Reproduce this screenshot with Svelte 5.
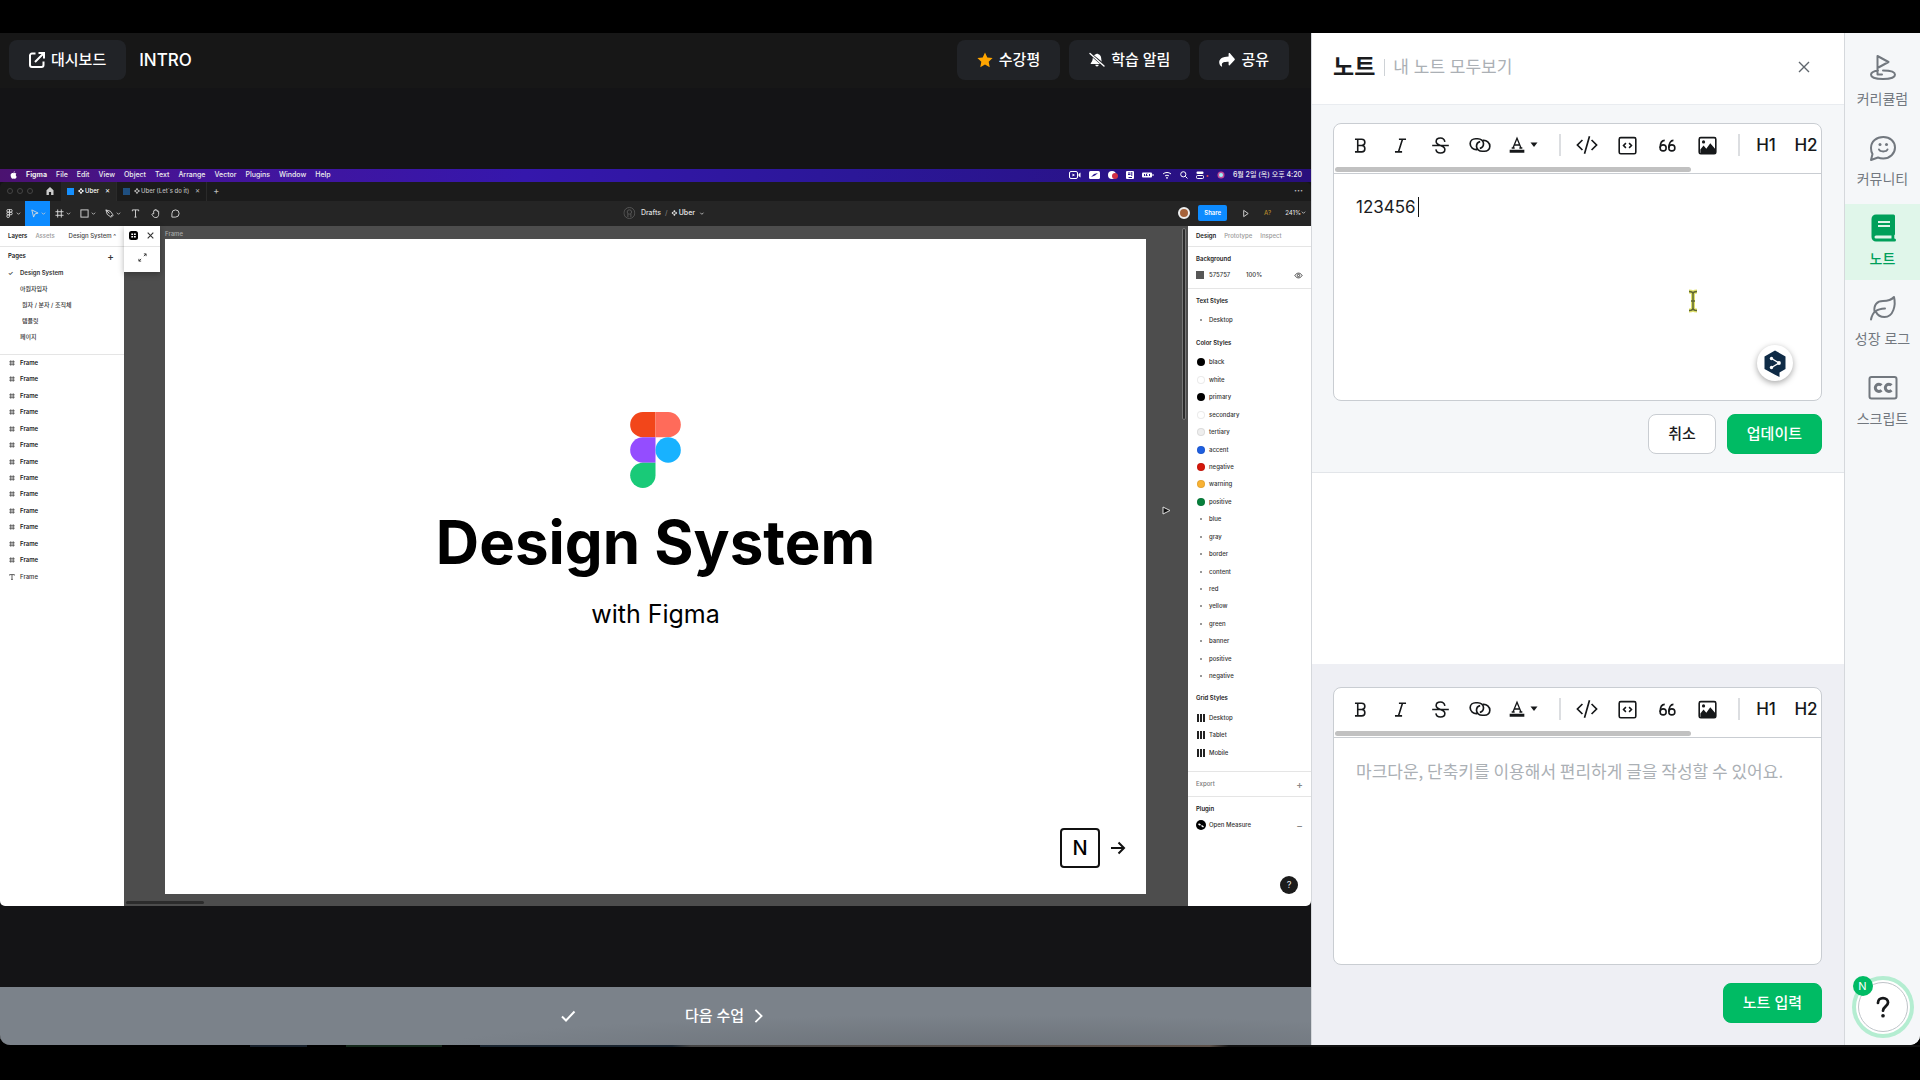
<script>
  /**
   * Lecture player
   *
   * 강의 영상 + 노트 패널 + 사이드 메뉴
   */

  let note = $state('123456');
  let newNote = $state('');

  const menus = ['File', 'Edit', 'View', 'Object', 'Text', 'Arrange', 'Vector', 'Plugins', 'Window', 'Help'];

  const pages = [
    { name: 'Design System', active: true },
    { name: '아원자입자' },
    { name: '원자 / 분자 / 조직체', nested: true },
    { name: '템플릿', nested: true },
    { name: '페이지' },
  ];

  const frames = Array.from({ length: 13 }, () => 'Frame');

  const colorStyles = [
    { name: 'black', color: '#000000' },
    { name: 'white', color: '#ffffff' },
    { name: 'primary', color: '#000000' },
    { name: 'secondary', color: '#ffffff' },
    { name: 'tertiary', color: '#eeeeee' },
    { name: 'accent', color: '#1e5fe0' },
    { name: 'negative', color: '#d4170b' },
    { name: 'warning', color: '#f9b233' },
    { name: 'positive', color: '#07803c' },
    { name: 'blue' },
    { name: 'gray' },
    { name: 'border' },
    { name: 'content' },
    { name: 'red' },
    { name: 'yellow' },
    { name: 'green' },
    { name: 'banner' },
    { name: 'positive' },
    { name: 'negative' },
  ];

  const gridStyles = ['Desktop', 'Tablet', 'Mobile'];

  const tabs = [
    { id: 'curriculum', label: '커리큘럼' },
    { id: 'community', label: '커뮤니티' },
    { id: 'note', label: '노트' },
    { id: 'log', label: '성장 로그' },
    { id: 'script', label: '스크립트' },
  ];

  let activeTab = $state('note');
</script>

{#snippet chevron()}
  <svg class="chev" viewBox="0 0 6 6"><path d="M1 2l2 2 2-2" /></svg>
{/snippet}

{#snippet hash()}
  <svg class="fi" viewBox="0 0 10 10"><path d="M3 0.5v9M7 0.5v9M0.5 3h9M0.5 7h9" /></svg>
{/snippet}

{#snippet diamond()}
  <svg class="diamond" viewBox="0 0 8 8">
    <path d="M4 0l1.700 1.700L4 3.400 2.300 1.700zM4 4.600l1.700 1.700L4 8 2.300 6.300zM0 4l1.700-1.700L3.400 4 1.700 5.700zM4.600 4l1.700-1.700L8 4 6.300 5.700z" />
  </svg>
{/snippet}

{#snippet toolbar()}
  <div class="toolbar">
    <div class="tools">
      <button aria-label="굵게">
        <svg viewBox="0 0 24 24"><path d="M6 4h7.500a4 4 0 0 1 0 8H8M13.500 12a4 4 0 0 1 0 8H6M8.500 4v16M5 4h3M5 20h3" /></svg>
      </button>
      <button aria-label="기울임">
        <svg viewBox="0 0 24 24"><path d="M10 4h9M5 20h9M14.500 4l-5 16" /></svg>
      </button>
      <button aria-label="취소선">
        <svg viewBox="0 0 24 24"><path d="M1.500 12h21M17.500 7.500C17 4.500 15 2.500 12 2.500c-3.200 0-5.500 1.900-5.500 4.500 0 2.500 2.500 4 5.500 5 3.300 1 5.500 2.200 5.500 5 0 2.700-2.200 4.500-5.500 4.500S6.500 19.500 6.200 17" /></svg>
      </button>
      <button aria-label="링크">
        <svg class="wide" viewBox="0 0 28 24">
          <path d="M10.500 17.500C6 18 2.200 14.500 2.200 10.500 2.200 7 5 4.500 8.800 4.500h2.400c4 0 7 2.700 7 6 0 3-2.200 5-4.400 5.500" />
          <path d="M17.500 6.500c4.500-.5 8.300 3 8.300 7 0 3.500-2.800 6-6.600 6h-2.400c-4 0-7-2.700-7-6 0-3 2.200-5 4.400-5.500" />
        </svg>
      </button>
      <button class="color" aria-label="글자색">
        <svg viewBox="0 0 24 24">
          <path d="M6 16.500L12 2l6 14.500M8.300 12h7.400M4 16.500h4.500M15.500 16.500H20" /><path class="solid" d="M1 19h22v4.500H1z" />
        </svg>
        <svg class="drop" viewBox="0 0 8 6"><path class="solid" d="M0.500 0.500h7L4 5z" /></svg>
      </button>
      <span class="sep"></span>
      <button aria-label="인라인 코드">
        <svg class="wide" viewBox="0 0 28 24"><path d="M8.500 6L2.500 12l6 6M19.500 6l6 6-6 6M17 1.500l-6 21" /></svg>
      </button>
      <button aria-label="코드 블록">
        <svg viewBox="0 0 24 24"><rect x="1.500" y="2" width="21" height="20.500" rx="2" /><path d="M10 9l-3 3 3 3M14 9l3 3-3 3" /></svg>
      </button>
      <button aria-label="인용">
        <svg viewBox="0 0 24 24">
          <circle cx="6.500" cy="15" r="3.800" /><path d="M8.500 5.500C5 5.500 2.700 9 2.700 15" />
          <circle cx="17.500" cy="15" r="3.800" /><path d="M19.500 5.500c-3.500 0-5.800 3.500-5.800 9.500" />
        </svg>
      </button>
      <button aria-label="이미지">
        <svg viewBox="0 0 24 24">
          <rect x="1.500" y="2" width="21" height="20.500" rx="2" /><circle class="solid" cx="7" cy="7.500" r="2" />
          <path class="solid" d="M3 21.500V17l4-5 3.500 4L15.500 9l6 7v5.500z" />
        </svg>
      </button>
      <span class="sep"></span>
      <button class="heading">H1</button>
      <button class="heading">H2</button>
    </div>
    <div class="scrollbar"></div>
  </div>
{/snippet}

<div class="app">
  <div class="window">
    <main class="player">
      <header class="top">
        <a class="chip" href="#dashboard">
          <svg viewBox="0 0 16 16" class="line"><path d="M6.500 1.500H3a2 2 0 0 0-2 2V13a2 2 0 0 0 2 2h9.500a2 2 0 0 0 2-2V9.500M6 10l8.500-8.500M9.500 1h5.500v5.500" /></svg>
          대시보드
        </a>
        <h1>INTRO</h1>
        <div class="spacer"></div>
        <button class="chip">
          <svg viewBox="0 0 16 16"><path fill="#ffa500" d="M8 0.500l2.300 4.900 5.300 0.700-3.900 3.700 1 5.400L8 12.600l-4.700 2.600 1-5.400L0.400 6.100l5.300-0.700z" /></svg>
          수강평
        </button>
        <button class="chip">
          <svg viewBox="0 0 16 16"><path fill="#fff" d="M5 3.300C5.700 2.500 6.600 2 7.400 1.900a.8.800 0 0 1 1.400 0c2 .4 3.400 2 3.400 4.300 0 1.500.3 2.700.8 3.600zM3.800 5.800L11 12H2.300c-.6 0-.8-.7-.4-1.100 1-1.100 1.800-2.300 1.900-5.100zM6.300 12.800h3.400a1.700 1.700 0 0 1-3.400 0z" /><path stroke="#fff" stroke-width="1.400" stroke-linecap="round" d="M1 1.500l14 12.500" /></svg>
          학습 알림
        </button>
        <button class="chip">
          <svg viewBox="0 0 16 16"><path fill="#fff" d="M9.600 1.400v3C3.600 4.500 0.200 6.600 0.200 10.300c0 1.800.9 3.400 2.200 4.300.4.300.8-.1.700-.5C2 10.500 4.500 9.700 9.600 9.700v3c0 .6.7.9 1.100.5l4.900-5.300a.9.900 0 0 0 0-1.200l-4.900-5.600c-.4-.4-1.100-.2-1.100.3z" /></svg>
          공유
        </button>
      </header>

      <section class="stage">
        <div class="video">
          <div class="menubar">
            <svg viewBox="0 0 8 9" class="apple"><path d="M5.400 0.200C4.600.3 3.900 1 4 1.900 4.900 1.900 5.500 1.100 5.400.2zM6.500 4.600c0-.9.700-1.300.8-1.400C6.500 2.100 5.300 2.200 4.900 2.300c-.6.300-.9.200-1.600 0C2 1.900.700 3 .7 4.800c0 2 1.300 3.900 2.200 3.900.5 0 .8-.3 1.400-.3s.8.300 1.400.3c.8 0 1.500-1.200 1.800-2.100-.6-.3-1-1-1-2z" /></svg>
            <b>Figma</b>
            {#each menus as m}<span>{m}</span>{/each}
            <div class="status">
              <svg viewBox="0 0 12 8"><rect x="0.500" y="0.500" width="8" height="7" rx="1.500" class="o" /><path d="M3.500 2.500v3l2.500-1.500zM9.500 3l2-1.500v5l-2-1.500z" /></svg>
              <svg viewBox="0 0 11 8"><rect width="11" height="8" rx="1.500" /><path fill="#2a1690" d="M2 6l3-3 4-1-3 2.500z" /></svg>
              <svg viewBox="0 0 10 8"><circle cx="4" cy="4" r="4" /><circle cx="7" cy="5" r="3" fill="#d22f45" /></svg>
              <svg viewBox="0 0 8 8"><rect width="8" height="8" rx="1" /><path stroke="#2a1690" d="M2 2h2.500M2 3.500h2.500M5.800 1v4M2.500 6.500h3.500" /></svg>
              <svg viewBox="0 0 12 8"><rect y="1.500" width="10" height="5" rx="1" /><path d="M11 3v2" stroke="#fff" /><path stroke="#2a1690" d="M2.500 3v2M5 2.500L4 4.500h1.500M7.500 3v2" /></svg>
              <svg viewBox="0 0 10 8"><path class="o" d="M1 3c2.400-2 5.600-2 8 0M3 5c1.200-1 2.800-1 4 0" /><circle cx="5" cy="6.800" r="0.900" /></svg>
              <svg viewBox="0 0 8 8"><circle cx="3.300" cy="3.300" r="2.600" class="o" /><path class="o" d="M5.300 5.300L7.500 7.500" /></svg>
              <svg viewBox="0 0 13 8"><rect x="0.500" y="0.500" width="7" height="2.500" rx="1" /><rect x="0.500" y="4.500" width="7" height="3" rx="1" class="o" /><circle cx="11.500" cy="5" r="1" fill="#e05050" /></svg>
              <svg viewBox="0 0 8 8"><circle cx="4" cy="4" r="3.500" fill="#c04a9a" /><circle cx="4" cy="4" r="2" fill="#9df3f5" /></svg>
              <span>6월 2일 (목) 오후 4:20</span>
            </div>
          </div>

          <div class="filebar">
            <i></i><i></i><i></i>
            <div class="home"><svg viewBox="0 0 8 8"><path fill="#ccc" d="M4 0L0.500 3.200V8h2.400V5h2.200v3h2.400V3.200z" /></svg></div>
            <div class="file on"><em></em>{@render diamond()}Uber<span class="x">✕</span></div>
            <div class="file"><em></em>{@render diamond()}Uber (Let`s do it)<span class="x">✕</span></div>
            <span class="plus">+</span>
            <span class="dots">···</span>
          </div>

          <div class="figbar">
            <div class="tool"><svg class="fi" viewBox="0 0 10 10"><path d="M5 0.500H3.500a1.500 1.500 0 0 0 0 3H5zM5 0.500h1.500a1.500 1.500 0 0 1 0 3H5zM5 3.500H3.500a1.500 1.500 0 0 0 0 3H5zM5 6.500H3.500A1.500 1.500 0 1 0 5 8zM6.500 3.500a1.500 1.500 0 1 1 0 3 1.500 1.500 0 0 1 0-3z" /></svg>{@render chevron()}</div>
            <div class="tool on"><svg class="fi" viewBox="0 0 10 10"><path d="M2 1l7 3.500-3.500 1L4 9z" /></svg>{@render chevron()}</div>
            <div class="tool">{@render hash()}{@render chevron()}</div>
            <div class="tool"><svg class="fi" viewBox="0 0 10 10"><rect x="1" y="1" width="8" height="8" /></svg>{@render chevron()}</div>
            <div class="tool"><svg class="fi" viewBox="0 0 10 10"><path d="M1 1l5 1.500L8.500 6 6 8.500 2.500 6zM1 1l4 4M6.500 9.500l3-3" /></svg>{@render chevron()}</div>
            <div class="tool single"><svg class="fi" viewBox="0 0 10 10"><path d="M1.500 2.500v-1.500h7v1.500M5 1v8M3.800 9h2.400" /></svg></div>
            <div class="tool single"><svg class="fi" viewBox="0 0 10 10"><path d="M3 5.500V2a.7.700 0 0 1 1.300 0V1a.7.700 0 0 1 1.400 0v.8a.7.700 0 0 1 1.400 0v1a.7.700 0 0 1 1.400 0V6c0 2-1 3.500-3.200 3.500C3 9.500 2 8 1 5.800c.5-.8 1.500-.8 2-.3z" /></svg></div>
            <div class="tool single"><svg class="fi" viewBox="0 0 10 10"><path d="M1 9V5a4 4 0 1 1 4 4z" /></svg></div>
            <div class="doc"><svg class="fi user" viewBox="0 0 12 12"><circle cx="6" cy="6" r="5.500" /><circle cx="6" cy="5" r="2.200" /><path d="M4.500 7v3M7.500 7v3" /></svg><span>Drafts</span><span class="dim">/</span><b>{@render diamond()}Uber</b>{@render chevron()}</div>
            <div class="actions">
              <div class="avatar"></div>
              <button class="share">Share</button>
              <svg class="fi" viewBox="0 0 10 10"><path d="M3 1.500L8 5 3 8.500z" /></svg>
              <span class="warn">A?</span>
              <span>241%{@render chevron()}</span>
            </div>
          </div>

          <div class="figma">
            <aside class="layers">
              <div class="tabs"><b>Layers</b><span>Assets</span><span class="page">Design System ^</span></div>
              <div class="pages">
                <div class="pages-head"><b>Pages</b><span>+</span></div>
                {#each pages as p}
                  <div class="page-row" class:nested={p.nested} class:current={p.active}><i>{p.active ? '✓' : ''}</i>{p.name}</div>
                {/each}
              </div>
              <div class="frames">
                {#each frames as f}
                  <div class="frame-row">{@render hash()}<b>{f}</b></div>
                {/each}
                <div class="frame-row text"><svg class="fi" viewBox="0 0 10 10"><path d="M1 2.500V1h8v1.500M5 1v8M3.500 9h3" /></svg>Frame</div>
              </div>
            </aside>

            <div class="canvas">
              <span class="frame-label">Frame</span>
              <div class="plugin">
                <div><svg viewBox="0 0 9 9"><rect width="9" height="9" rx="2.500" /><path stroke="#fff" stroke-width="1.400" d="M2.300 3.300h1.800M5 3.300h1.800M2.300 5.800h1.800M5 5.800h1.800" /></svg><svg class="fi dark" viewBox="0 0 8 8"><path d="M1.500 1.500l5 5M6.500 1.500l-5 5" /></svg></div>
                <div><svg class="fi dark" viewBox="0 0 10 10"><path d="M6.500 3.500L9 1M6.500 1H9v2.500M3.500 6.500L1 9M1 6.500V9h2.500" /></svg></div>
              </div>
              <div class="artboard">
                <svg class="logo" viewBox="0 0 50 75">
                  <path fill="#f2461a" d="M25 0H12.500a12.500 12.500 0 0 0 0 25H25z" />
                  <path fill="#ff6b5a" d="M25 0h12.500a12.500 12.500 0 0 1 0 25H25z" />
                  <path fill="#944dff" d="M25 25H12.500a12.500 12.500 0 0 0 0 25H25z" />
                  <circle fill="#18b2ff" cx="37.500" cy="37.500" r="12.500" />
                  <path fill="#19ca78" d="M25 50H12.500A12.500 12.500 0 1 0 25 62.500z" />
                </svg>
                <h2>Design System</h2>
                <p>with Figma</p>
                <div class="next"><kbd>N</kbd><svg viewBox="0 0 16 14"><path d="M1 7h13M8.500 1.500L14 7l-5.500 5.500" /></svg></div>
              </div>
              <svg class="pointer" viewBox="0 0 9 9"><path fill="#111" stroke="#ddd" d="M1 1l7 3.500L1 8z" /></svg>
              <div class="vbar"></div>
              <div class="hbar"></div>
            </div>

            <aside class="props">
              <div class="tabs"><b>Design</b><span>Prototype</span><span>Inspect</span></div>
              <div class="bg">
                <h3>Background</h3>
                <div class="row"><em></em><span class="hex">575757</span>100%<svg class="fi dark eye" viewBox="0 0 10 8"><path d="M1 4c2-3.500 6-3.500 8 0-2 3.500-6 3.500-8 0z" /><circle cx="5" cy="4" r="1.300" /></svg></div>
              </div>
              <div class="styles">
                <h3>Text Styles</h3>
                <div class="row"><i class="arrow"></i>Desktop</div>
                <h3 class="colors-head">Color Styles</h3>
                <div class="colors">
                  {#each colorStyles as c}
                    <div class="row">
                      {#if c.color}<i class="swatch" style="background: {c.color}"></i>{:else}<i class="arrow"></i>{/if}{c.name}
                    </div>
                  {/each}
                </div>
                <h3>Grid Styles</h3>
                <div class="grids">
                  {#each gridStyles as g}
                    <div class="row"><i class="cols"></i>{g}</div>
                  {/each}
                </div>
              </div>
              <div class="export"><span>Export</span><span class="sign">+</span></div>
              <div class="plugins">
                <h3>Plugin</h3>
                <div class="row"><svg class="om" viewBox="0 0 10 10"><circle cx="5" cy="5" r="5" /><path stroke="#fff" stroke-width="1.500" d="M2.500 4l2 1M5.500 5.500l2 1.500" /></svg>Open Measure<span class="sign">−</span></div>
              </div>
              <div class="qmark">?</div>
            </aside>
          </div>
        </div>
      </section>

      <footer class="bottom">
        <svg class="check" viewBox="0 0 16 14"><path d="M2 7.500l4 4 8.500-9" /></svg>
        <button>다음 수업<svg viewBox="0 0 10 18"><path d="M1.500 2l7 7-7 7" /></svg></button>
      </footer>
    </main>

    <section class="panel">
      <header class="panel-head">
        <h2>노트</h2>
        <a href="#notes">내 노트 모두보기</a>
        <button aria-label="닫기"><svg viewBox="0 0 12 12"><path d="M1 1l10 10M11 1L1 11" /></svg></button>
      </header>

      <div class="edit">
        <div class="editor">
          {@render toolbar()}
          <textarea aria-label="노트 수정" bind:value={note}></textarea>
          <span class="caret"></span>
          <svg class="ibeam" viewBox="0 0 12 24"><path stroke="#dfe06a" stroke-width="4" d="M2 2.500c2 0 4 .5 4 2.500v14c0 2-2 2.500-4 2.500M10 2.500c-2 0-4 .5-4 2.500v14c0 2 2 2.500 4 2.500" /><path stroke="#5f6530" stroke-width="1.500" d="M2 2.500c2 0 4 .5 4 2.500v14c0 2-2 2.500-4 2.500M10 2.500c-2 0-4 .5-4 2.500v14c0 2 2 2.500 4 2.500M4 12h4" /></svg>
          <button class="deepl" aria-label="DeepL">
            <svg viewBox="0 0 22 27"><path fill="#0f2b46" d="M11 0.500l10.500 6v12.500l-6 3.500v4.500l-5-2.500L0.500 19V6.500z" /><path stroke="#fff" stroke-width="1.300" fill="none" d="M7.500 8.500l7.500 4.500-7.500 4.500" /><circle cx="7.500" cy="8.500" r="1.700" fill="#fff" /><circle cx="15" cy="13" r="1.900" fill="#fff" /><circle cx="7.500" cy="17.500" r="1.700" fill="#fff" /></svg>
          </button>
        </div>
        <div class="buttons">
          <button class="btn">취소</button>
          <button class="btn primary">업데이트</button>
        </div>
      </div>

      <div class="list"></div>

      <div class="write">
        <div class="editor">
          {@render toolbar()}
          <textarea aria-label="노트 작성" placeholder="마크다운, 단축키를 이용해서 편리하게 글을 작성할 수 있어요." bind:value={newNote}></textarea>
        </div>
        <div class="buttons">
          <button class="btn primary">노트 입력</button>
        </div>
      </div>
    </section>

    <nav class="side">
      {#each tabs as t}
        <button class:active={activeTab === t.id} onclick={() => (activeTab = t.id)}>
          <svg viewBox="0 0 30 30">
            {#if t.id === 'curriculum'}
              <path d="M9.500 21.500V3l11 6-11 6M10 17.500c-4 .6-7 2-7 4.200C3 24.500 8.500 26 15 26s12-1.500 12-4.300c0-2.700-5-4.200-12-4.200M9.500 21.500h4.500" />
            {:else if t.id === 'community'}
              <path d="M3 27l1.500-6C3.300 19 3 17 3 15 3 8.500 8.500 4 15.300 4S27 8.500 27 14.500 22 25.500 15.300 25.500c-2 0-3.800-.3-5.300-1zM11 16.500c1 2.500 7.500 2.500 8.500 0" />
              <circle class="dot" cx="12" cy="11.500" r="1.500" /><circle class="dot" cx="18.500" cy="11.500" r="1.500" />
            {:else if t.id === 'note'}
              <path class="book" fill-rule="evenodd" d="M8 1.500h17.500a1.500 1.500 0 0 1 1.500 1.500v18a1.500 1.500 0 0 1-.7 1.300v3.200h.2a1.500 1.500 0 0 1 0 3H8A4.500 4.500 0 0 1 3.500 24V6A4.500 4.500 0 0 1 8 1.500zM8 22.500a1.500 1.500 0 0 0 0 3h15.500v-3zM10 8v2h12V8zM10 12v2h12v-2z" />
            {:else if t.id === 'log'}
              <path d="M3 26.500C4.500 18.500 9 16 17 15.500M6.500 19C5.500 12 9 8 15 8c5 0 8-.5 11-4 2 8-.5 20-9.500 20-4 0-7-2-8.500-5" />
            {:else}
              <rect x="1.500" y="4" width="27" height="21.500" rx="2" />
              <path class="cc" d="M13.500 12.300a3.600 3.600 0 1 0 0 5M23.500 12.300a3.600 3.600 0 1 0 0 5" />
            {/if}
          </svg>
          {t.label}
        </button>
      {/each}
      <button class="help" aria-label="도움말">
        <svg viewBox="0 0 16 24"><path d="M2.500 7.500C2.500 4 5 2.200 8 2.200s5.500 1.900 5.500 5c0 4-5.500 4.200-5.500 8.800" /><circle cx="8" cy="21.500" r="2" /></svg>
        <span class="badge">N</span>
      </button>
    </nav>
  </div>
  <div class="dock"></div>
</div>

<style>
  :global(body) {
    margin: 0;
    background: #000;
  }

  .app {
    display: flex;
    flex-direction: column;
    box-sizing: border-box;
    height: 100vh;
    padding: 33px 0;
    background: #000;
    font-family: Inter, 'Noto Sans CJK KR', sans-serif;
  }

  .app :global(*) {
    box-sizing: border-box;
  }

  button {
    font: inherit;
    border: 0;
    padding: 0;
    cursor: pointer;
  }

  a {
    text-decoration: none;
  }

  h1,
  h2,
  h3,
  p {
    margin: 0;
  }

  .window {
    flex: 1;
    min-height: 0;
    display: grid;
    grid-template-columns: minmax(0, 1fr) 534px 75px;
    border-radius: 0 0 10px 10px;
    overflow: hidden;
    background: #f5f7f9;
  }

  .dock {
    height: 2px;
    background: linear-gradient(90deg, #000 13%, #17202b 13%, #17202b 16%, #000 16%, #000 18%, #14281a 18%, #14281a 23%, #000 23%, #000 25%, #1a2530 25%, #1a2530 35%, #444 36%, #5c5048 63%, #111 64%);
  }

  /* player */
  .player {
    display: flex;
    flex-direction: column;
    background: #141416;
    min-height: 0;
  }

  .top {
    display: flex;
    align-items: center;
    gap: 9px;
    height: 55px;
    padding: 0 22px 2px 9px;
    background: #171717;
    color: #fff;
  }

  .top h1 {
    margin-left: 4px;
    font-size: 17px;
    font-weight: 500;
    line-height: 24px;
  }

  .spacer {
    flex: 1;
  }

  .chip {
    display: flex;
    align-items: center;
    gap: 6px;
    height: 40px;
    padding: 0 20px;
    border-radius: 8px;
    background: #212327;
    color: #fff;
    font-size: 15px;
    font-weight: 500;
    line-height: 24px;
  }

  .chip svg {
    width: 16px;
    height: 16px;
    fill: none;
  }

  .chip .line {
    stroke: #fff;
    stroke-width: 2;
  }

  .stage {
    flex: 1;
    display: flex;
    align-items: center;
    min-height: 0;
  }

  .video {
    display: flex;
    flex-direction: column;
    width: 100%;
    aspect-ratio: 16 / 9;
    border-radius: 0 0 5px 5px;
    overflow: hidden;
    font-size: 6px;
    font-weight: 500;
    line-height: 10px;
    color: #333;
  }

  .menubar {
    display: flex;
    align-items: center;
    gap: 9px;
    height: 13px;
    padding: 0 9px 0 10px;
    background: linear-gradient(90deg, #4b1270, #45149a 15%, #3517ac 40%, #2b1798 65%, #280f7c);
    color: #eee;
    font-size: 7px;
    font-weight: 500;
    white-space: nowrap;
  }

  .menubar svg {
    height: 8px;
    fill: #fff;
  }

  .menubar .o {
    fill: none;
    stroke: #fff;
  }

  .status {
    display: flex;
    align-items: center;
    gap: 8px;
    margin-left: auto;
  }

  .filebar {
    display: flex;
    align-items: center;
    height: 19px;
    padding-left: 7px;
    border-radius: 5px 5px 0 0;
    background: #1b1b1b;
    color: #bbb;
  }

  .filebar > i {
    width: 6px;
    height: 6px;
    margin-right: 4px;
    border: 1px solid #444;
    border-radius: 50%;
  }

  .home {
    display: flex;
    width: 22px;
    justify-content: center;
    margin-left: 2px;
  }

  .home svg {
    width: 8px;
  }

  .file {
    display: flex;
    align-items: center;
    align-self: stretch;
    padding: 0 6px;
    border-right: 1px solid #2a2a2a;
    white-space: nowrap;
  }

  .file.on {
    background: #252525;
    color: #fff;
  }

  .file em {
    width: 7px;
    height: 7px;
    margin-right: 4px;
    background: #1f4f80;
  }

  .file.on em {
    background: #1590ff;
  }

  .x {
    margin-left: 6px;
  }

  .diamond {
    width: 6px;
    height: 6px;
    margin-right: 1px;
    fill: currentColor;
  }

  .plus {
    margin-left: 6px;
    font-size: 9px;
  }

  .dots {
    margin: 0 8px 0 auto;
    font-size: 9px;
    font-weight: 700;
  }

  .figbar {
    display: flex;
    align-items: center;
    position: relative;
    height: 25px;
    background: #252525;
    color: #ddd;
  }

  .fi {
    width: 9px;
    height: 9px;
    fill: none;
    stroke: #ddd;
    stroke-width: 1;
  }

  .fi.dark {
    stroke: #333;
  }

  .chev {
    width: 5px;
    height: 5px;
    fill: none;
    stroke: #ccc;
  }

  .tool {
    display: flex;
    align-items: center;
    justify-content: center;
    align-self: stretch;
    gap: 2px;
    width: 25px;
  }

  .tool.on {
    background: #0d8bff;
  }

  .tool.single {
    width: 20px;
  }

  .doc {
    position: absolute;
    left: 50%;
    transform: translateX(-50%);
    display: flex;
    align-items: center;
    gap: 4px;
    padding-left: 16px;
    font-size: 7px;
  }

  .doc b {
    display: flex;
    align-items: center;
    font-weight: 600;
  }

  .user {
    width: 12px;
    height: 12px;
    margin-right: 2px;
    stroke: #555;
  }

  .dim {
    color: #777;
  }

  .actions {
    display: flex;
    align-items: center;
    gap: 14px;
    margin: 0 5px 0 auto;
  }

  .avatar {
    width: 12px;
    height: 12px;
    margin-right: -6px;
    border: 2px solid #eee;
    border-radius: 50%;
    background: #a5623a;
  }

  .share {
    height: 16px;
    padding: 0 6px;
    border-radius: 2px;
    background: #0d8bff;
    color: #fff;
    font-weight: 600;
  }

  .warn {
    color: #b8892c;
  }

  .figma {
    flex: 1;
    display: grid;
    grid-template-columns: 124px minmax(0, 1fr) 123px;
    min-height: 0;
  }

  .layers,
  .props {
    background: #fff;
  }

  .figma b,
  .figma h3 {
    font-size: 6px;
    font-weight: 600;
    line-height: 10px;
    color: #222;
  }

  .tabs {
    display: flex;
    align-items: center;
    gap: 8px;
    height: 21px;
    padding: 1px 8px 0;
    border-bottom: 1px solid #e5e5e5;
    color: #999;
  }

  .tabs .page {
    margin-left: auto;
    color: #444;
  }

  .pages {
    height: 108px;
    padding: 1px 8px 0;
    border-bottom: 1px solid #e5e5e5;
  }

  .pages-head {
    display: flex;
    justify-content: space-between;
    align-items: center;
    height: 17px;
    padding-right: 2px;
  }

  .pages-head span {
    font-size: 10px;
  }

  .page-row {
    display: flex;
    align-items: center;
    height: 16px;
  }

  .page-row.current {
    font-weight: 600;
  }

  .page-row i {
    width: 12px;
    font-style: normal;
  }

  .page-row.nested i {
    width: 14px;
  }

  .frames {
    display: grid;
    grid-auto-rows: 1fr;
    height: 230px;
  }

  .frame-row {
    display: flex;
    align-items: center;
    gap: 5px;
    padding-left: 9px;
  }

  .frame-row .fi {
    width: 6px;
    height: 6px;
    stroke: #444;
    stroke-width: 1.4;
  }

  .canvas {
    position: relative;
    display: flex;
    padding: 13px 42px 12px 41px;
    background: #4d4d4d;
  }

  .frame-label {
    position: absolute;
    top: 3px;
    left: 41px;
    color: #aaa;
  }

  .plugin {
    position: absolute;
    top: 0;
    left: 0;
    width: 36px;
    height: 46px;
    background: #fff;
    box-shadow: 0 2px 6px rgba(0, 0, 0, 0.3);
  }

  .plugin div {
    display: flex;
    align-items: center;
    justify-content: center;
    gap: 8px;
    height: 21px;
    border-bottom: 1px solid #e5e5e5;
  }

  .plugin div + div {
    border: 0;
  }

  .plugin svg {
    width: 9px;
    height: 9px;
  }

  .artboard {
    position: relative;
    flex: 1;
    display: flex;
    flex-direction: column;
    align-items: center;
    padding-top: 173px;
    background: #fff;
    color: #000;
  }

  .logo {
    width: 51px;
    height: 76px;
  }

  .artboard h2 {
    margin-top: 18px;
    font-size: 60px;
    font-weight: 700;
    line-height: 72px;
  }

  .artboard p {
    margin-top: 20px;
    font-size: 25px;
    font-weight: 400;
    line-height: 32px;
  }

  .next {
    position: absolute;
    right: 20px;
    bottom: 26px;
    display: flex;
    align-items: center;
    gap: 10px;
  }

  .next kbd {
    width: 40px;
    height: 40px;
    border: 2px solid #111;
    border-radius: 4px;
    font-family: inherit;
    font-size: 20px;
    font-weight: 500;
    line-height: 36px;
    text-align: center;
  }

  .next svg {
    width: 16px;
    fill: none;
    stroke: #111;
    stroke-width: 2;
  }

  .pointer {
    position: absolute;
    right: 17px;
    top: 280px;
    width: 9px;
  }

  .vbar {
    position: absolute;
    top: 2px;
    right: 2px;
    width: 4px;
    height: 192px;
    border: 1px solid #777;
    border-radius: 2px;
    background: #2c2c2c;
  }

  .hbar {
    position: absolute;
    left: 2px;
    bottom: 2px;
    width: 78px;
    height: 3px;
    border-radius: 2px;
    background: #2c2c2c;
  }

  .props {
    position: relative;
  }

  .props .tabs,
  .bg,
  .styles,
  .export,
  .plugins {
    padding-left: 8px;
    padding-right: 8px;
  }

  .row {
    display: flex;
    align-items: center;
    height: 17px;
  }

  .row i {
    flex: none;
  }

  .bg {
    height: 42px;
    padding-top: 7px;
    border-bottom: 1px solid #e5e5e5;
  }

  .bg .row,
  .plugins .row {
    margin-top: 3px;
  }

  .bg em {
    width: 8px;
    height: 8px;
    margin-right: 5px;
    background: #575757;
  }

  .hex {
    width: 37px;
  }

  .eye {
    margin-left: auto;
  }

  .styles {
    height: 483px;
    padding-top: 7px;
    border-bottom: 1px solid #e5e5e5;
  }

  .styles h3 + .row {
    margin-top: 6px;
  }

  .styles .colors-head {
    margin-top: 9px;
  }

  .colors {
    display: grid;
    grid-auto-rows: 1fr;
    height: 331px;
    margin: 6px 0 8px;
  }

  .colors .row,
  .grids .row {
    height: auto;
  }

  .grids {
    display: grid;
    grid-auto-rows: 1fr;
    height: 53px;
    margin-top: 6px;
  }

  .swatch {
    width: 8px;
    height: 8px;
    margin: 0 4px 0 1px;
    border: 1px solid rgba(0, 0, 0, 0.08);
    border-radius: 50%;
  }

  .arrow {
    width: 2px;
    height: 2px;
    margin: 0 7px 0 4px;
    background: #999;
  }

  .cols {
    width: 8px;
    height: 8px;
    margin: 0 4px 0 1px;
    border: solid #222;
    border-width: 0 2px;
    background: linear-gradient(90deg, transparent 1px, #222 1px, #222 3px, transparent 3px);
  }

  .export {
    display: flex;
    align-items: center;
    justify-content: space-between;
    height: 25px;
    border-bottom: 1px solid #e5e5e5;
    color: #777;
  }

  .sign {
    margin-left: auto;
    font-size: 10px;
    color: #888;
  }

  .plugins {
    padding-top: 7px;
  }

  .om {
    width: 10px;
    margin-right: 3px;
  }

  .qmark {
    position: absolute;
    right: 13px;
    bottom: 12px;
    width: 18px;
    height: 18px;
    border-radius: 50%;
    background: #1b1b1b;
    color: #ddd;
    font-size: 9px;
    line-height: 18px;
    text-align: center;
  }

  .bottom {
    display: flex;
    align-items: center;
    justify-content: center;
    gap: 109px;
    height: 58px;
    padding-left: 12px;
    background: radial-gradient(ellipse at 75% 110%, #6b7178, #7b828a 40%);
  }

  .bottom .check {
    width: 16px;
    height: 14px;
  }

  .bottom svg {
    fill: none;
    stroke: #fff;
    stroke-width: 2;
  }

  .bottom button {
    display: flex;
    align-items: center;
    gap: 10px;
    background: none;
    color: #fff;
    font-size: 15px;
    font-weight: 500;
    line-height: 24px;
  }

  .bottom button svg {
    width: 9px;
    height: 16px;
  }

  /* note panel */
  .panel {
    display: flex;
    flex-direction: column;
    min-height: 0;
    border: solid #d5d8dc;
    border-width: 0 1px;
    background: #fff;
  }

  .panel-head {
    display: flex;
    align-items: center;
    height: 72px;
    padding: 0 34px 3px 21px;
    border-bottom: 1px solid #e9ecf0;
  }

  .panel-head h2 {
    color: #1b1c1e;
    font-size: 23px;
    font-weight: 700;
    line-height: 32px;
  }

  .panel-head a {
    margin-left: 9px;
    padding-left: 8px;
    border-left: 1px solid #ced2d6;
    color: #abb0b5;
    font-size: 17px;
    line-height: 17px;
  }

  .panel-head button {
    display: flex;
    margin-left: auto;
    background: none;
  }

  .panel-head svg {
    width: 12px;
    stroke: #5f666d;
    stroke-width: 1.4;
  }

  .edit {
    padding: 18px 22px 18px 21px;
    border-bottom: 1px solid #e2e5e9;
    background: #f5f7f9;
  }

  .list {
    flex: 1;
  }

  .write {
    padding: 23px 22px 22px 21px;
    background: #eeeff4;
  }

  .editor {
    position: relative;
    display: flex;
    flex-direction: column;
    height: 278px;
    border: 1px solid #c9cdd2;
    border-radius: 8px;
    overflow: hidden;
    background: #fff;
  }

  .toolbar {
    border-bottom: 1px solid #c9cdd2;
    padding-bottom: 1px;
  }

  .tools {
    display: flex;
    align-items: center;
    gap: 8px;
    padding: 5px 0 0 10px;
    overflow: hidden;
  }

  .tools button {
    display: flex;
    align-items: center;
    justify-content: center;
    flex: none;
    width: 32px;
    height: 32px;
    background: none;
    color: #16181a;
  }

  .tools button.color {
    justify-content: flex-start;
    gap: 5px;
    width: 40px;
    padding-left: 5px;
  }

  .tools svg {
    width: 19px;
    height: 19px;
    fill: none;
    stroke: #16181a;
    stroke-width: 2;
  }

  .tools .wide {
    width: 24px;
    height: 20px;
  }

  .tools .color svg {
    width: 16px;
    height: 18px;
  }

  .tools .color .drop {
    width: 8px;
    height: 6px;
  }

  .tools .solid {
    fill: #16181a;
    stroke: none;
  }

  .tools .heading {
    font-size: 17px;
    font-weight: 500;
  }

  .sep {
    flex: none;
    width: 2px;
    height: 22px;
    margin: 0 2px 0 7px;
    background: #dcdee1;
  }

  .scrollbar {
    width: 73%;
    height: 5px;
    margin: 6px 0 0 1px;
    border-radius: 3px;
    background: #c1c1c1;
  }

  textarea {
    flex: 1;
    width: 100%;
    padding: 20px 22px;
    border: 0;
    outline: 0;
    resize: none;
    background: none;
    color: #1b1c1e;
    font: inherit;
    font-size: 17px;
    line-height: 26px;
  }

  textarea::placeholder {
    color: #abb0b5;
    font-family: 'Noto Sans CJK KR', sans-serif;
    opacity: 1;
  }

  .caret {
    position: absolute;
    left: 84px;
    top: 73px;
    width: 1px;
    height: 20px;
    background: #111;
  }

  .ibeam {
    position: absolute;
    right: 122px;
    top: 165px;
    width: 12px;
    height: 24px;
    fill: none;
  }

  .deepl {
    position: absolute;
    right: 28px;
    bottom: 19px;
    display: flex;
    align-items: center;
    justify-content: center;
    width: 36px;
    height: 36px;
    border-radius: 50%;
    background: #fff;
    box-shadow: 0 2px 6px rgba(0, 0, 0, 0.35);
  }

  .deepl svg {
    width: 22px;
    height: 27px;
  }

  .buttons {
    display: flex;
    justify-content: flex-end;
    gap: 11px;
    margin-top: 13px;
  }

  .write .buttons {
    margin-top: 18px;
  }

  .btn {
    height: 40px;
    padding: 0 19px;
    border: 1px solid #c9cdd2;
    border-radius: 8px;
    background: #fff;
    color: #1b1c1e;
    font-size: 15px;
    font-weight: 500;
    line-height: 24px;
  }

  .btn.primary {
    border-color: #00b862;
    background: #00bb64;
    color: #fff;
  }

  /* side menu */
  .side {
    display: flex;
    flex-direction: column;
    align-items: stretch;
    gap: 4px;
    padding-top: 11px;
    background: #f5f7f9;
  }

  .side button {
    display: flex;
    flex-direction: column;
    align-items: center;
    gap: 6px;
    height: 76px;
    padding-top: 9px;
    background: none;
    color: #72787f;
    font-size: 14px;
    line-height: 20px;
  }

  .side button.active {
    background: #e0f6ea;
    color: #00a05a;
    font-weight: 500;
  }

  .side svg {
    width: 30px;
    height: 30px;
    fill: none;
    stroke: #72787f;
    stroke-width: 2;
    stroke-linejoin: round;
    stroke-linecap: round;
  }

  .side .cc {
    stroke-width: 3;
    stroke-linecap: butt;
  }

  .side .dot {
    fill: #72787f;
    stroke: none;
  }

  .side .book {
    fill: #00a05a;
    stroke: none;
  }

  .side .help {
    position: relative;
    align-self: center;
    justify-content: center;
    width: 50px;
    height: 50px;
    margin: auto 0 13px;
    padding: 0;
    border: 1px solid #bfc4c9;
    border-radius: 50%;
    background: #fff;
    box-shadow: 0 0 0 2px #fff, 0 0 0 6px #b4edd1;
  }

  .help svg {
    width: 16px;
    height: 22px;
    stroke: #16181a;
    stroke-width: 3;
  }

  .help circle {
    fill: #16181a;
    stroke: none;
  }

  .badge {
    position: absolute;
    top: -7px;
    left: -6px;
    width: 20px;
    height: 20px;
    border-radius: 50%;
    background: #00bb64;
    color: #fff;
    font-size: 11px;
    line-height: 20px;
    text-align: center;
  }
</style>
